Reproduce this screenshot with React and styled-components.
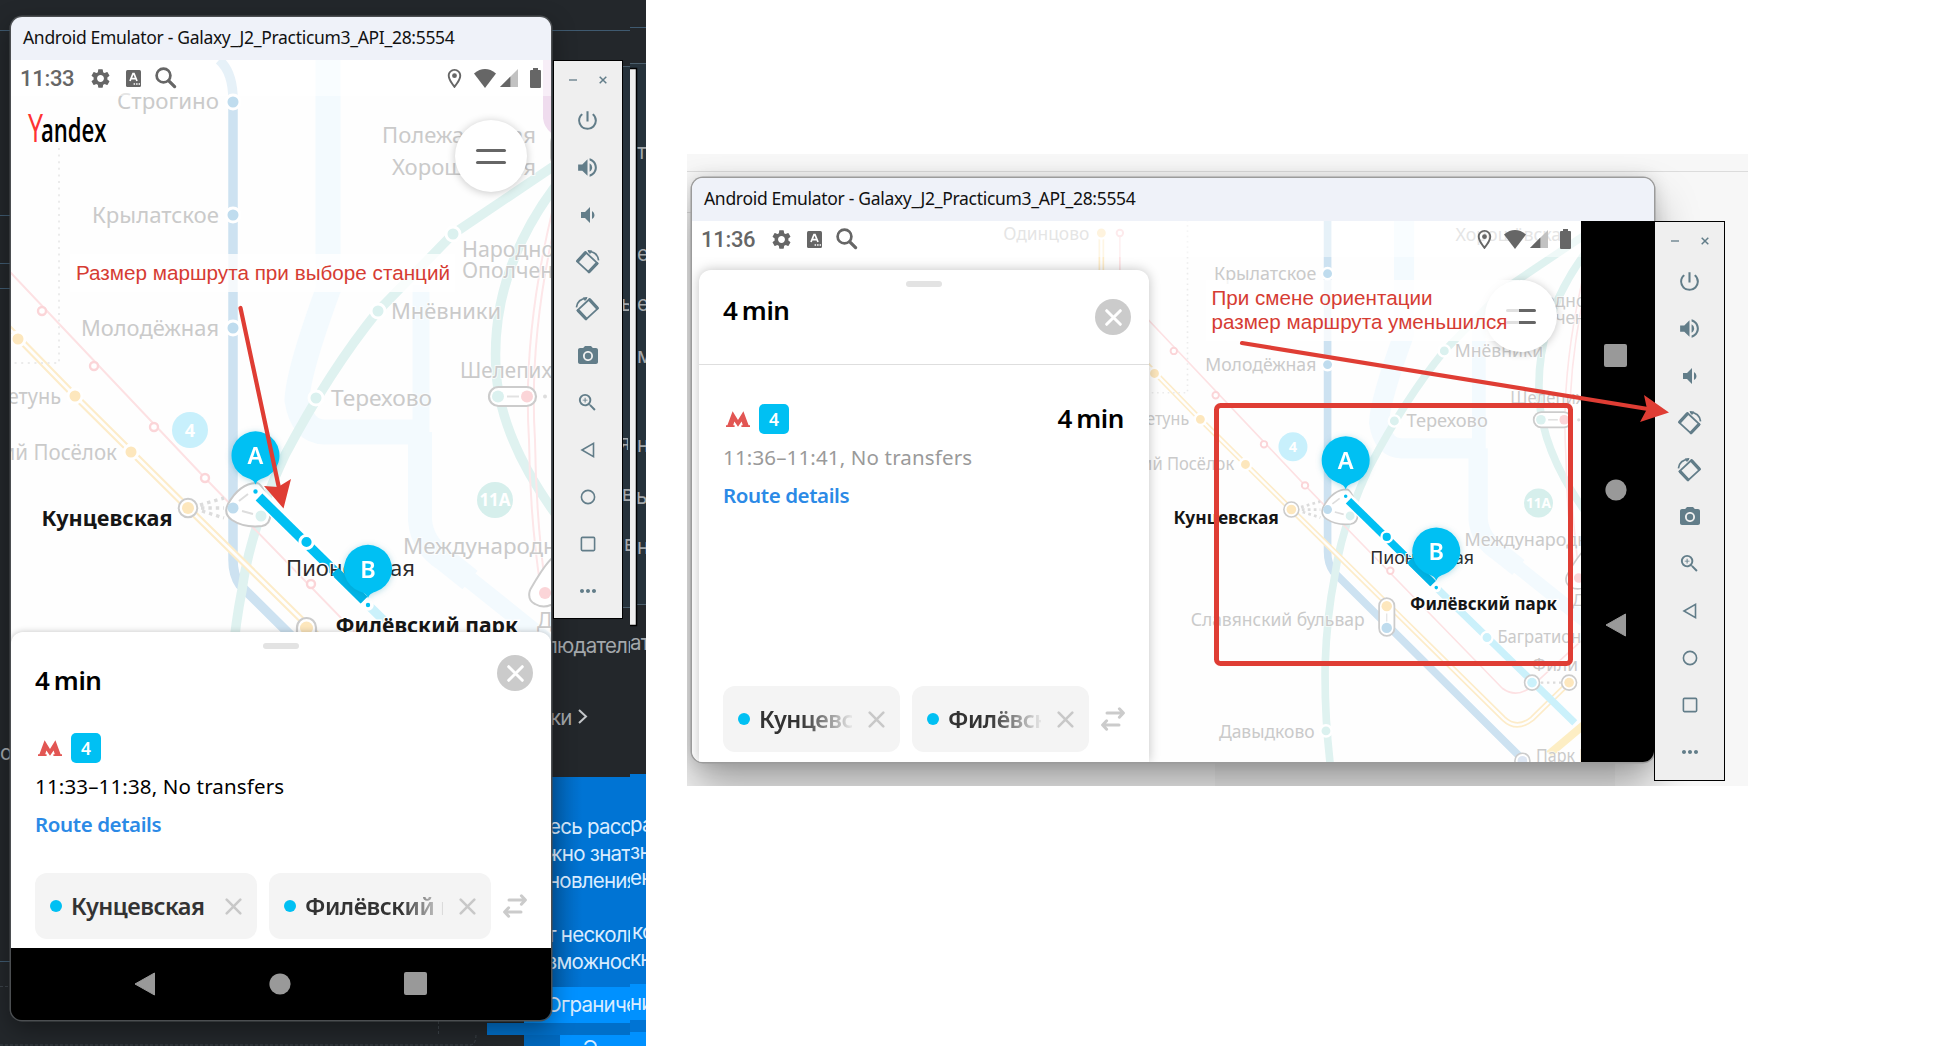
import React from "react";
import styled, { createGlobalStyle, css } from "styled-components";
import {
  MdPowerSettingsNew,
  MdVolumeUp,
  MdVolumeDown,
  MdPhotoCamera,
  MdZoomIn,
  MdMoreHoriz,
  MdSettings,
  MdOutlineLocationOn,
} from "react-icons/md";

const GlobalStyle = createGlobalStyle`
  * { box-sizing: border-box; }
  body { margin: 0; background: #fff; font-family: "Noto Sans", "Open Sans", sans-serif; }
`;

const Page = styled.main`
  display: flex;
  align-items: flex-start;
  gap: 41px;
  width: 1944px;
  height: 1046px;
  overflow: hidden;
  position: relative;
  background: #fff;
`;

/* ---------- desktops ---------- */

const DarkDesktop = styled.section`
  position: relative;
  width: 646px;
  height: 1046px;
  overflow: hidden;
  background: #23272b;
`;

const LightDesktop = styled.section`
  position: relative;
  width: 1061px;
  height: 632px;
  margin-top: 154px;
  overflow: hidden;
  background: #f7f7f7;
`;

const Patch = styled.div`
  position: absolute;
  left: ${(p) => p.$x}px;
  top: ${(p) => p.$y}px;
  width: ${(p) => p.$w}px;
  height: ${(p) => p.$h}px;
  background: ${(p) => p.$bg};
`;

const Fragment = styled.span`
  position: absolute;
  left: ${(p) => p.$x}px;
  top: ${(p) => p.$y - 18}px;
  max-width: ${(p) => p.$w || 200}px;
  height: 28px;
  overflow: hidden;
  font: 400 20.5px/26px Inter, Roboto, sans-serif;
  letter-spacing: -0.75px;
  white-space: nowrap;
  color: ${(p) => p.$color || "#a3a8ac"};
`;

const EmulatorArea = styled.div`
  position: absolute;
  left: ${(p) => p.$x}px;
  top: ${(p) => p.$y}px;
  display: flex;
  align-items: flex-start;
`;

/* ---------- emulator window ---------- */

const Window = styled.div`
  display: flex;
  flex-direction: column;
  width: ${(p) => p.$w}px;
  height: ${(p) => p.$h}px;
  border-radius: 11px;
  overflow: hidden;
  box-shadow: ${(p) => p.$shadow};
`;

const TitleBar = styled.div`
  height: ${(p) => p.$h}px;
  padding-left: 12px;
  background: #eff2f9;
  color: #111;
  font-size: 17.5px;
  line-height: ${(p) => p.$h - 2}px;
  letter-spacing: -0.31px;
  white-space: nowrap;
  flex: none;
`;

const WindowBody = styled.div`
  display: flex;
  flex: 1;
  min-height: 0;
  flex-direction: ${(p) => (p.$landscape ? "row" : "column")};
`;

const Screen = styled.div`
  position: relative;
  flex: 1;
  min-width: 0;
  display: flex;
  flex-direction: column;
  background: #fefefe;
  overflow: hidden;
`;

const MapSvg = styled.svg`
  position: absolute;
  left: 0;
  top: 0;
  font-family: "Noto Sans", sans-serif;
`;

const StatusBar = styled.div`
  position: relative;
  flex: none;
  display: flex;
  align-items: center;
  height: 36px;
  padding: 0 10px;
  background: rgba(255, 255, 255, 0.5);
  color: #666;
`;

const Clock = styled.span`
  width: 69px;
  margin-left: -1px;
  font: 500 22px/37px Roboto, sans-serif;
  letter-spacing: -0.3px;
`;

const StatusGroup = styled.span`
  display: flex;
  align-items: center;
  gap: ${(p) => p.$gap}px;
`;

const Spacer = styled.span`
  width: ${(p) => p.$w}px;
`;

const Grow = styled.div`
  flex: 1;
`;

const AppHeader = styled.div`
  position: relative;
  display: flex;
  justify-content: space-between;
  align-items: flex-start;
  padding: 12px 24px 0 15px;
`;

const SplitRow = styled.div`
  position: relative;
  display: flex;
  justify-content: space-between;
  align-items: flex-start;
  padding-right: 24px;
`;

const MenuButton = styled.button`
  display: flex;
  flex-direction: column;
  align-items: center;
  justify-content: center;
  gap: 9px;
  width: 72px;
  height: 72px;
  margin-top: ${(p) => p.$mt}px;
  padding: 0;
  border: 0;
  border-radius: 50%;
  background: #fff;
  box-shadow: 0 1px 8px rgba(0, 0, 0, 0.22);
`;

const MenuLine = styled.i`
  width: 30px;
  height: 3px;
  border-radius: 2px;
  background: #666;
`;

/* ---------- route sheet ---------- */

const Sheet = styled.div`
  position: relative;
  display: flex;
  flex-direction: column;
  flex: none;
  background: #fff;
  border-radius: 12px 12px 0 0;
  box-shadow: 0 0 ${(p) => (p.$landscape ? 12 : 6)}px rgba(0, 0, 0, 0.24);
  ${(p) =>
    p.$landscape
      ? css`
          width: 450px;
          height: 492px;
          margin: 13px 0 0 7px;
        `
      : css`
          height: 316px;
        `}
`;

const Handle = styled.div`
  width: 36px;
  height: 6px;
  margin: 11px auto 0;
  border-radius: 3px;
  background: #e3e3e3;
`;

const SheetHead = styled.div`
  display: flex;
  justify-content: space-between;
  height: ${(p) => (p.$landscape ? 78 : 84)}px;
  padding: 0 18px 0 24px;
  ${(p) => p.$landscape && "border-bottom: 1px solid #dedede;"}
`;

const Duration = styled.span`
  display: block;
  font-size: 26px;
  font-weight: 600;
  line-height: 36px;
  letter-spacing: -0.4px;
  word-spacing: -2px;
  color: #000;
  margin-top: ${(p) => p.$mt || 0}px;
`;

const CloseButton = styled.button`
  display: grid;
  place-items: center;
  width: 36px;
  height: 36px;
  margin-top: ${(p) => p.$mt}px;
  padding: 0;
  border: 0;
  border-radius: 50%;
  background: #cbcbcb;
`;

const Route = styled.div`
  display: flex;
  flex-direction: column;
  flex: 1;
  padding: ${(p) => (p.$landscape ? "39px 25px 0 24px" : "0 24px")};
`;

const RouteTop = styled.div`
  display: flex;
  align-items: center;
  height: 30px;
`;

const LineBadge = styled.span`
  width: 30px;
  height: 30px;
  margin-left: 9px;
  border-radius: 5px;
  background: #00c0f3;
  color: #fff;
  font-size: 17.5px;
  font-weight: 600;
  line-height: 30px;
  text-align: center;
`;

const Times = styled.div`
  margin-top: 9px;
  font-size: 20.5px;
  line-height: 28px;
  letter-spacing: 0.15px;
  color: ${(p) => (p.$muted ? "#9a9a9a" : "#000")};
`;

const DetailsLink = styled.a`
  margin-top: 10px;
  font-size: 20.5px;
  font-weight: 600;
  line-height: 28px;
  letter-spacing: -0.4px;
  color: #2b8ae6;
`;

const Stops = styled.div`
  display: flex;
  align-items: center;
  gap: 12px;
  padding: 0 24px ${(p) => (p.$landscape ? 10 : 9)}px;
`;

const StopChip = styled.div`
  display: flex;
  align-items: center;
  width: ${(p) => p.$w}px;
  height: 66px;
  padding: 0 15px;
  border-radius: 12px;
  background: #f4f4f4;
`;

const StopDot = styled.i`
  flex: none;
  width: 12px;
  height: 12px;
  margin-right: 9px;
  border-radius: 50%;
  background: #00c0f3;
`;

const StopName = styled.span`
  flex: 1;
  min-width: 0;
  overflow: hidden;
  white-space: nowrap;
  font-size: 23.5px;
  font-weight: 600;
  letter-spacing: -0.5px;
  line-height: 34px;
  color: #333;
  ${(p) => p.$fade && `mask-image: linear-gradient(90deg, #000 ${p.$fade}%, transparent 104%);`}
`;

const ClearSlot = styled.span`
  display: grid;
  place-items: center;
  flex: none;
  width: 18px;
  margin-left: 15px;
`;

/* ---------- navigation bar ---------- */

const NavBar = styled.div`
  flex: none;
  display: flex;
  align-items: center;
  justify-content: center;
  background: #000;
  ${(p) =>
    p.$landscape
      ? css`
          width: 73px;
          flex-direction: column-reverse;
          gap: 112px;
          padding: 0 4px 2px 0;
        `
      : css`
          height: 72px;
          gap: 113px;
          padding: 0 2px 1px 0;
        `}
`;

/* ---------- emulator toolbar ---------- */

const Toolbar = styled.div`
  display: flex;
  flex-direction: column;
  align-items: center;
  width: ${(p) => p.$w}px;
  height: ${(p) => p.$h}px;
  margin: ${(p) => p.$mt}px 0 0 ${(p) => p.$ml || 0}px;
  border: 1.5px solid #000;
  background: #efefef;
  color: #627d89;
`;

const ToolbarTop = styled.div`
  display: flex;
  align-items: center;
  justify-content: space-between;
  width: 38px;
  height: 38px;
  margin-bottom: -2px;
`;

const ToolSlot = styled.div`
  display: grid;
  place-items: center;
  height: 47px;
`;

const Overlay = styled.svg`
  position: absolute;
  left: 0;
  top: 0;
  pointer-events: none;
  font-family: "Liberation Sans", Arial, sans-serif;
`;

/* ---------- icons ---------- */

const RotateIcon = ({ flip }) => (
  <svg width="25" height="25" viewBox="0 0 25 25" fill="none" stroke="currentColor" transform={flip ? "scale(-1 1)" : undefined}>
    <path strokeWidth="1.8" strokeLinejoin="round" d="M2 12.4 L10.4 3 L22.6 14.4 L14 23.4 Z" />
    <path strokeWidth="3.2" strokeLinecap="round" d="M2.9 11.9 L10.3 3.9 M14.2 22.5 L21.7 14.7" />
    <path strokeWidth="1.6" d="M13 2.4 Q22.4 2.6 23.6 11.4" />
    <path fill="currentColor" stroke="none" d="M12.4 1 L17.2 1.6 L15 5.2 Z" />
  </svg>
);

const Cross = ({ size, color, width }) => (
  <svg width={size} height={size} viewBox="0 0 16 16">
    <path d="M1.6 1.6 L14.4 14.4 M14.4 1.6 L1.6 14.4" stroke={color} strokeWidth={width} strokeLinecap="round" />
  </svg>
);

const SwapIcon = () => (
  <svg width="24" height="24" viewBox="0 0 24 24" fill="none" stroke="#cbcbcb" strokeWidth="3" strokeLinecap="round" strokeLinejoin="round">
    <path d="M6 6 H22 M18.4 1.8 L22.4 6 L18.4 10.2 M18 18 H2 M5.6 13.8 L1.6 18 L5.6 22.2" />
  </svg>
);

const MetroIcon = () => (
  <svg width="30" height="18" viewBox="0 0 30 18" style={{ marginLeft: -3 }}>
    <path fill="#e25653" d="M6 17 V15.200 H7.400 L12.600 1.200 L18 10 L23.400 1.200 L28.600 15.200 H30 V17 H21.400 V15.200 H22.800 L21.600 11.400 L18 16.800 L14.400 11.400 L13.200 15.200 H14.600 V17 H6 Z" />
  </svg>
);

const SearchIcon = () => (
  <svg width="22" height="22" viewBox="0 0 22 22" fill="none" stroke="#666" strokeLinecap="round">
    <circle cx="8.500" cy="8.500" r="6.900" strokeWidth="2.700" />
    <path d="M13.800 13.800 L19.600 19.600" strokeWidth="3.300" />
  </svg>
);

const SubtitlesIcon = () => (
  <svg width="15" height="17" viewBox="0 0 15 17">
    <rect width="15" height="17" rx="1.5" fill="#666" />
    <path d="M4 11 L7 3.600 H8 L11 11 M5 8.600 H10" stroke="#fff" strokeWidth="1.700" fill="none" />
    <path d="M7.600 14 H14" stroke="#fff" strokeWidth="1.500" strokeDasharray="1.500 1" />
  </svg>
);

const WifiIcon = () => (
  <svg width="22" height="19" viewBox="0 0 22 19">
    <path fill="#666" d="M11 19 L0 4.400 Q11 -4.400 22 4.400 Z" />
  </svg>
);

const SignalIcon = () => (
  <svg width="18" height="18" viewBox="0 0 18 18">
    <path fill="#c2c2c2" d="M18 0 V18 H0 Z" />
    <path fill="#666" d="M10.400 7.600 V18 H0 Z" />
  </svg>
);

const BatteryIcon = () => (
  <svg width="11" height="20" viewBox="0 0 11 20">
    <path fill="#666" d="M3 0 H8 V2 H10 Q11 2 11 3 V19 Q11 20 10 20 H1 Q0 20 0 19 V3 Q0 2 1 2 H3 Z" />
  </svg>
);

const YandexLogo = () => (
  <svg width="84" height="36" viewBox="0 0 84 36" fontFamily="'Open Sans', sans-serif">
    <text x="2" y="34" fontSize="39" fontWeight="500" fill="#f33" textLength="15" lengthAdjust="spacingAndGlyphs">Y</text>
    <text x="15" y="34" fontSize="33" fontWeight="600" fill="#000" textLength="65.500" lengthAdjust="spacingAndGlyphs">andex</text>
  </svg>
);

/* ---------- metro map ---------- */

const labels = [
  ["Строгино", 117, 109, 102],
  ["Крылатское", 92, 222.5, 127],
  ["Молодёжная", 81, 335.5, 138],
  ["Полежаевская", 382, 142.5, 154],
  ["Хорошёвская", 392, 175, 144],
  ["Народное", 462, 256.5, 104],
  ["Ополчение", 462, 277.5, 116],
  ["Мнёвники", 391, 318.5, 110],
  ["Терехово", 331, 405.5, 101],
  ["Шелепиха", 460, 377.5, 103],
  ["Международная", 403, 553.5, 179],
  ["Сетунь", -5, 403.5, 66],
  ["Рабочий Посёлок", -57, 459.5, 174],
  ["Одинцово", -170, 173, 107],
  ["Славянский бульвар", 63, 653, 216],
  ["Давыдково", 98, 791.5, 119],
  ["Багратионовская", 444, 674, 172],
  ["Фили", 487, 708, 57],
  ["Парк Победы", 492, 821, 130],
];

const stations = [
  [233, 102, "#bfdcee"], [233, 215, "#bfdcee"], [233, 328, "#bfdcee"],
  [453, 234, "#dbf1ef"], [378, 311, "#dbf1ef"], [316, 398, "#dbf1ef"],
  [18, 339, "#fde7bd"], [75, 396, "#fde7bd"], [131, 452, "#fde7bd"],
  [-48, 164.5, "#fde7bd"], [231, 783, "#dbf1ef"], [431, 667, "#cbf1fb"],
];

const pinkStations = [[42, 311], [94, 366], [154, 427], [205, 478], [311, 584], [-25, 164.5]];

const Pin = ({ x, y, s, letter }) => (
  <g transform={`translate(${x} ${y}) scale(${s})`} filter="url(#pinShadow)">
    <path fill="#00c0f3" d="M0 -7 C-1.500 -11 -4 -12 -8 -13.500 A24 24 0 1 1 8 -13.500 C4 -12 1.500 -11 0 -7 Z" />
    <text y="-27.500" textAnchor="middle" fontSize="23.500" fontWeight="600" fill="#fff">{letter}</text>
  </g>
);

const Band = ({ d, w }) => <path d={d} fill="none" stroke="#f3fafe" strokeWidth={w} />;
const Line = ({ d, c, w = 9.5 }) => <path d={d} fill="none" stroke={c} strokeWidth={w} />;

const MetroMap = ({ width, height, viewBox, pinScale = 1 }) => (
  <MapSvg width={width} height={height} viewBox={viewBox} preserveAspectRatio="none">
    <defs>
      <filter id="pinShadow" x="-50%" y="-50%" width="200%" height="200%">
        <feDropShadow dx="0" dy="1" stdDeviation="3" floodColor="#0788a8" floodOpacity="0.3" />
      </filter>
    </defs>
    <Band w="25" d="M328 40 V290 Q298 372 297 400 Q302 432 325 432 H413" />
    <Band w="17" d="M421 285 V515 Q424 545 445 560 L560 652" />
    <Band w="24" d="M420 432 V520 Q422 545 445 560 L470 580" />

    <Line c="#cde2f1" d="M219 60 Q233 72 233 100 V560 Q233 575 240 585 L478 821" />
    <Line c="#dff2f0" d="M560 162 L453 234 L378 311 Q330 370 285 455 Q250 530 242 590 Q232 640 230 700 Q229 760 236 822" />
    <Line c="#dff2f0" d="M560 180 Q490 270 496 370 Q500 440 560 520" />
    <Line c="#efdcee" w="10" d="M548 40 V118 Q549 126 556 130" />
    <path d="M560 130 Q551 134 551 144 V158 Q552 166 560 168" fill="none" stroke="#ccc" strokeWidth="2" />

    <Line c="#fde1e3" w="2" d="M-25 164 V235 L205 478 L450 730 Q466 742 484 730 L556 664" />
    <Line c="#fde6e8" w="2" d="M556 196 Q522 330 529 440 Q530 520 541 590" />
    <Line c="#fde6e8" w="2" d="M561 199 Q528 330 535 440 Q536 520 546 590" />
    <Line c="#fdecc9" w="7" d="M-48 164 V270 L75 396 L188 508 L241 560 L452 768 Q468 783 487 768 L533 723" />
    <Line c="#fefefe" w="2.8" d="M-48 164 V270 L75 396 L188 508 L241 560 L452 768 Q468 783 487 768 L533 723" />
    <Line c="#fdeec4" w="10" d="M508 812 L560 768" />
    <Line c="#cbf1fb" w="9" d="M368 605 L540 773" />

    <path d="M59 148 V363 H11" fill="none" stroke="#ebebeb" strokeWidth="2" strokeDasharray="2 4.600" />

    {stations.map(([x, y, c]) => (
      <circle key={`${x}-${y}`} cx={x} cy={y} r="7" fill={c} stroke="#fff" strokeWidth="3" />
    ))}
    {pinkStations.map(([x, y]) => (
      <circle key={`${x}-${y}`} cx={x} cy={y} r="4" fill="#fff" stroke="#fbd5d8" strokeWidth="2.400" />
    ))}

    <path d="M530 590 Q527 600 535 604 Q545 610 556 602 L556 555 Q547 560 530 590" fill="#fff" stroke="#ccc" strokeWidth="2" />
    <circle cx="545" cy="593" r="6" fill="#fbd5d8" />
    <rect x="489" y="387" width="47" height="19" rx="9.500" fill="#fff" stroke="#ccc" strokeWidth="2.200" />
    <circle cx="498" cy="396.500" r="6" fill="#dbf1ef" />
    <circle cx="527" cy="396.500" r="6" fill="#fbd5d8" />
    <path d="M507 396.500 H519" stroke="#e2e2e2" strokeWidth="2" />
    <circle cx="545" cy="396.500" r="2" fill="#ddd" />
    <rect x="297" y="618" width="19" height="47" rx="9.500" fill="#fff" stroke="#ccc" strokeWidth="2.200" />
    <circle cx="306.500" cy="628" r="6.500" fill="#fde7bd" />
    <circle cx="306.500" cy="655" r="6.500" fill="#bfdcee" />
    <path d="M306.500 637 V647" stroke="#e2e2e2" strokeWidth="1.500" />
    {[[188, 508, "#fde7bd"], [487, 723, "#cbf1fb"], [533, 723, "#fde7bd"], [475, 820, "#dde6f3"]].map(([x, y, c]) => (
      <g key={`${x}-${y}`}>
        <circle cx={x} cy={y} r="9.300" fill="#fff" stroke="#ccc" strokeWidth="2" />
        <circle cx={x} cy={y} r="6" fill={c} />
      </g>
    ))}
    <path d="M200 505 L224 498 M201 508 H224 M202 511 L224 518" stroke="#dcdcdc" strokeWidth="3.400" strokeDasharray="3.400 4" />
    <path d="M498 723 H524" stroke="#dcdcdc" strokeWidth="3" strokeDasharray="3 4.500" />
    <path d="M228 504 Q240 483 257 483 Q264 484 270 510 Q272 524 262 526 Q244 528 232 520 Q223 514 228 504 Z" fill="#fff" stroke="#c8c8c8" strokeWidth="2" />
    <circle cx="233" cy="508" r="5.500" fill="#bfdcee" />
    <circle cx="261" cy="516" r="5.500" fill="#dbf1ef" />
    <path d="M239 501 L248 494 M242 511 L253 514" stroke="#ddd" strokeWidth="2" />

    <circle cx="190" cy="430" r="18" fill="#c8f0fc" />
    <text x="190" y="437" textAnchor="middle" fontSize="18" fontWeight="700" fill="#fff">4</text>
    <circle cx="495" cy="500" r="18" fill="#d6efec" />
    <text x="495" y="506" textAnchor="middle" fontSize="17" fontWeight="700" fill="#fff">11A</text>

    <g fill="#cacaca" fontSize="21.500" stroke="#fff" strokeWidth="2" strokeOpacity="0.7" paintOrder="stroke">
      {labels.map(([t, x, y, w]) => (
        <text key={t} x={x} y={y} textLength={w} lengthAdjust="spacingAndGlyphs">{t}</text>
      ))}
      <text x="537" y="628" fontSize="21">Деловой центр</text>
    </g>

    <path d="M255.500 492 L368 605" stroke="#fff" strokeWidth="14" />
    <path d="M259 497 L364 600" stroke="#00c0f3" strokeWidth="9.500" />
    <text x="286" y="575.500" fontSize="21.500" fill="#2b2b2b" stroke="#fff" strokeWidth="2.500" paintOrder="stroke" textLength="129" lengthAdjust="spacingAndGlyphs">Пионерская</text>
    <path d="M335 571 L364 600" stroke="#00b4e6" strokeWidth="9.500" />
    <circle cx="306.500" cy="542" r="6.600" fill="#00c0f3" stroke="#fff" strokeWidth="3" />
    {[[255.5, 491.5], [368, 605]].map(([x, y]) => (
      <circle key={x} cx={x} cy={y} r="4" fill="#00c0f3" stroke="#fff" strokeWidth="3.600" />
    ))}
    <g fill="#161616" fontSize="21.500" fontWeight="700" stroke="#fff" strokeWidth="3" paintOrder="stroke">
      <text x="41.500" y="526" textLength="131" lengthAdjust="spacingAndGlyphs">Кунцевская</text>
      <text x="335.500" y="632.500" textLength="182.500" lengthAdjust="spacingAndGlyphs">Филёвский парк</text>
    </g>
    <Pin x={255.5} y={491.5} s={pinScale} letter="A" />
    <Pin x={368} y={605} s={pinScale} letter="B" />
  </MapSvg>
);

/* ---------- composed parts ---------- */

const Status = ({ time }) => (
  <StatusBar>
    <Clock>{time}</Clock>
    <StatusGroup $gap={14}>
      <MdSettings size={23} />
      <SubtitlesIcon />
      <SearchIcon />
    </StatusGroup>
    <Grow />
    <StatusGroup $gap={0}>
      <MdOutlineLocationOn size={23} />
      <Spacer $w={8} />
      <WifiIcon />
      <Spacer $w={4} />
      <SignalIcon />
      <Spacer $w={12} />
      <BatteryIcon />
    </StatusGroup>
  </StatusBar>
);

const Stop = ({ name, width, fade }) => (
  <StopChip $w={width}>
    <StopDot />
    <StopName $fade={fade}>{name}</StopName>
    <ClearSlot>
      <Cross size={17} color="#c8c8c8" width={2.4} />
    </ClearSlot>
  </StopChip>
);

const RouteSheet = ({ landscape, times }) => (
  <Sheet $landscape={landscape}>
    <Handle />
    <SheetHead $landscape={landscape}>
      <Duration $mt={landscape ? 5 : 13}>4 min</Duration>
      <CloseButton $mt={landscape ? 12 : 6}>
        <Cross size={17} color="#fff" width={2.8} />
      </CloseButton>
    </SheetHead>
    <Route $landscape={landscape}>
      <RouteTop>
        <MetroIcon />
        <LineBadge>4</LineBadge>
        <Grow />
        {landscape && <Duration $mt={-2}>4 min</Duration>}
      </RouteTop>
      <Times $muted={landscape}>{times}, No transfers</Times>
      <DetailsLink>Route details</DetailsLink>
    </Route>
    <Stops $landscape={landscape}>
      <Stop name="Кунцевская" width={landscape ? 177 : 222} fade={landscape ? 45 : 0} />
      <Stop name="Филёвский парк" width={landscape ? 177 : 222} fade={landscape ? 45 : 70} />
      <SwapIcon />
    </Stops>
  </Sheet>
);

const Navigation = ({ landscape }) => (
  <NavBar $landscape={landscape}>
    <svg width="22" height="24" viewBox="0 0 22 24"><path d="M1 12 L20.500 1 V23 Z" fill="#999" stroke="#999" strokeLinejoin="round" /></svg>
    <svg width="22" height="22" viewBox="0 0 22 22"><circle cx="11" cy="11" r="10.600" fill="#999" /></svg>
    <svg width="23" height="23" viewBox="0 0 23 23"><rect width="23" height="23" rx="2" fill="#999" /></svg>
  </NavBar>
);

const Tools = ({ w, h, mt, ml }) => (
  <Toolbar $w={w} $h={h} $mt={mt} $ml={ml}>
    <ToolbarTop>
      <svg width="8" height="8" viewBox="0 0 8 8"><path d="M0 4 H8" stroke="#7d929c" strokeWidth="1.600" /></svg>
      <svg width="8" height="8" viewBox="0 0 8 8"><path d="M0.700 0.700 L7.300 7.300 M7.300 0.700 L0.700 7.300" stroke="#627d89" strokeWidth="1.500" /></svg>
    </ToolbarTop>
    <ToolSlot><MdPowerSettingsNew size={25} /></ToolSlot>
    <ToolSlot><MdVolumeUp size={25} /></ToolSlot>
    <ToolSlot><MdVolumeDown size={24} /></ToolSlot>
    <ToolSlot><RotateIcon /></ToolSlot>
    <ToolSlot><RotateIcon flip /></ToolSlot>
    <ToolSlot><MdPhotoCamera size={24} /></ToolSlot>
    <ToolSlot><MdZoomIn size={23} /></ToolSlot>
    <ToolSlot><svg width="16" height="16" viewBox="0 0 16 16"><path d="M2 8 L13.500 1.400 V14.600 Z" fill="none" stroke="currentColor" strokeWidth="1.600" /></svg></ToolSlot>
    <ToolSlot><svg width="16" height="16" viewBox="0 0 16 16"><circle cx="8" cy="8" r="6.600" fill="none" stroke="currentColor" strokeWidth="1.600" /></svg></ToolSlot>
    <ToolSlot><svg width="16" height="16" viewBox="0 0 16 16"><rect x="1.400" y="1.400" width="13.200" height="13.200" rx="1" fill="none" stroke="currentColor" strokeWidth="1.600" /></svg></ToolSlot>
    <ToolSlot><MdMoreHoriz size={24} /></ToolSlot>
  </Toolbar>
);

const TITLE = "Android Emulator - Galaxy_J2_Practicum3_API_28:5554";

const patches = [
  [0, 30, 11, 1, "#3f5a70"], [551, 30, 79, 1, "#3f5a70"], [630, 27, 16, 1, "#3f5a70"],
  [0, 215, 11, 1, "#3f5a70"], [0, 263, 11, 1, "#3f5a70"], [0, 288, 11, 1, "#3f5a70"],
  [0, 961, 11, 1, "#3f5a70"],
  [551, 66, 79, 541, "#26323b"], [630, 63, 16, 541, "#26323b"],
  [622, 66, 8, 1, "#4b5e6c"], [630, 63, 16, 1, "#4b5e6c"], [622, 607, 8, 1, "#4b5e6c"], [636, 604, 10, 1, "#4b5e6c"],
  [551, 777, 79, 246, "linear-gradient(90deg,#0062b4,#0074d4 40%)"], [630, 774, 16, 260, "#0074d4"],
  [524, 987, 106, 36, "#0091ff"], [630, 984, 16, 36, "#0091ff"],
  [487, 1023, 143, 12, "#006fc9"], [524, 1035, 36, 11, "#0068bd"], [560, 1035, 70, 11, "#0091ff"], [630, 1032, 16, 14, "#0091ff"],
];

const BLUE_TEXT = "#d9ecff";

const fragments = [
  ["о", 0, 758, 10], ["ь", 621, 309, 8], ["я", 619, 448, 9], ["в", 622, 499, 8], ["в", 624, 549, 6],
  ["т", 637, 157], ["е", 637, 259], ["ел", 637, 309], ["м", 637, 361], ["ни", 637, 450], ["ы", 636, 502], ["н", 637, 552],
  ["людатель", 546, 651, 84], ["ате", 630, 648], ["ки", 550, 723],
  ["есь расс", 549, 832, 81, BLUE_TEXT], ["жно знать", 546, 859, 84, BLUE_TEXT], ["новления", 548, 886, 82, BLUE_TEXT],
  ["т несколько", 547, 940, 83, BLUE_TEXT], ["зможность", 547, 967, 83, BLUE_TEXT], ["Ограничен", 546, 1010, 84, BLUE_TEXT], ["Э", 583, 1053, 30, BLUE_TEXT],
  ["ра", 630, 830, 30, BLUE_TEXT], ["зн", 630, 857, 30, BLUE_TEXT], ["ен", 630, 883, 30, BLUE_TEXT],
  ["ко", 632, 937, 30, BLUE_TEXT], ["кн", 630, 964, 30, BLUE_TEXT], ["ни", 630, 1008, 30, BLUE_TEXT],
];

export default function App() {
  return (
    <Page>
      <GlobalStyle />
      <DarkDesktop>
        {patches.map(([x, y, w, h, bg], i) => (
          <Patch key={i} $x={x} $y={y} $w={w} $h={h} $bg={bg} />
        ))}
        {fragments.map(([t, x, y, w, c], i) => (
          <Fragment key={i} $x={x} $y={y} $w={w} $color={c}>{t}</Fragment>
        ))}
        <Overlay width="646" height="1046">
          <path d="M579 710 L586 716.500 L579 723" fill="none" stroke="#c3c6c9" strokeWidth="2" />
          <path d="M0 986.500 H11 M438.500 1021 V1034 M0 1045 H470 Q476 1045 476 1034" fill="none" stroke="#3b4248" strokeDasharray="3 2" />
          <path d="M630 68.500 H636.500 V625.500 H630" fill="#efefef" stroke="#000" strokeWidth="1.500" />
        </Overlay>
        <EmulatorArea $x={11} $y={17}>
          <Window $w={540} $h={1003} $shadow="0 0 0 1.5px #4b4e51, 0 8px 24px rgba(0,0,0,.4)">
            <TitleBar $h={43}>{TITLE}</TitleBar>
            <WindowBody>
              <Screen>
                <MetroMap width={540} height={600} viewBox="11 60 540 600" />
                <Status time="11:33" />
                <AppHeader>
                  <YandexLogo />
                  <MenuButton $mt={12}><MenuLine /><MenuLine /></MenuButton>
                </AppHeader>
                <Grow />
                <RouteSheet times="11:33–11:38" />
              </Screen>
              <Navigation />
            </WindowBody>
          </Window>
          <Tools w={70} h={559} mt={43} ml={1.5} />
        </EmulatorArea>
      </DarkDesktop>

      <LightDesktop>
        <Patch $x={0} $y={17} $w={1061} $h={1} $bg="#dcdcdc" />
        <Patch $x={0} $y={58} $w={8} $h={1} $bg="#dcdcdc" />
        <Patch $x={528} $y={600} $w={400} $h={32} $bg="#f0f0f0" />
        <EmulatorArea $x={5} $y={24}>
          <Window $w={962} $h={584} $shadow="0 0 0 1.5px #9b9b9b, 0 26px 44px rgba(0,0,0,.34), 0 0 18px rgba(0,0,0,.16)">
            <TitleBar $h={43}>{TITLE}</TitleBar>
            <WindowBody $landscape>
              <Screen>
                <MetroMap width={889} height={541} viewBox="-556.500 149.600 1104.300 672" pinScale={1.242} />
                <Status time="11:36" />
                <SplitRow>
                  <RouteSheet landscape times="11:36–11:41" />
                  <MenuButton $mt={23}><MenuLine /><MenuLine /></MenuButton>
                </SplitRow>
              </Screen>
              <Navigation landscape />
            </WindowBody>
          </Window>
          <Tools w={71} h={560} mt={43} />
        </EmulatorArea>
      </LightDesktop>

      <Overlay width="1944" height="1046">
        <rect x="70" y="254" width="385" height="38" fill="#fff" opacity="0.8" />
        <text x="76" y="279.500" fontSize="20.500" fill="#d63c33" textLength="374" lengthAdjust="spacingAndGlyphs">Размер маршрута при выборе станций</text>
        <path d="M240.500 308 L279 488" stroke="#df3d34" strokeWidth="4.200" strokeLinecap="round" />
        <path d="M264 486 L278 487 L291 479 L283.500 508.500 Z" fill="#df3d34" />

        <rect x="1206" y="280" width="313" height="61" fill="#fff" opacity="0.8" />
        <g fontSize="20.500" fill="#d63c33">
          <text x="1211.500" y="304.500" textLength="221" lengthAdjust="spacingAndGlyphs">При смене ориентации</text>
          <text x="1211.500" y="328.500" textLength="296" lengthAdjust="spacingAndGlyphs">размер маршрута уменьшился</text>
        </g>
        <rect x="1216.500" y="405.500" width="354" height="258" rx="4" fill="none" stroke="#df3d34" strokeWidth="5" />
        <path d="M1242 343 L1648 409" stroke="#df3d34" strokeWidth="4.200" strokeLinecap="round" />
        <path d="M1644 395 L1647 409 L1640 422 L1669 412.500 Z" fill="#df3d34" />
      </Overlay>
    </Page>
  );
}
